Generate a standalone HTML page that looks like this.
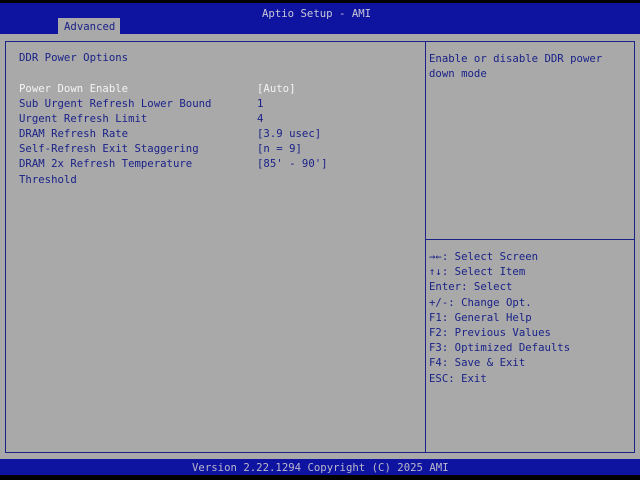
<!DOCTYPE html>
<html><head><style>
body{margin:0;width:640px;height:480px;overflow:hidden;background:#000;font-family:"DejaVu Sans Mono","Liberation Mono",monospace;font-size:10.67px;}
.hdr{position:absolute;left:0;top:3px;width:640px;height:31px;background:#0f14a0;}
.t{position:absolute;white-space:pre;line-height:12px;}
.body{position:absolute;left:0;top:34px;width:640px;height:425px;background:#a9a9a9;}
.foot{position:absolute;left:0;top:459px;width:640px;height:16px;background:#0f14a0;}
.b{color:#1a2288;}
</style></head><body>
<div class="hdr"></div>
<div class="t" style="left:262px;top:8px;color:#c8c8d8">Aptio Setup - AMI</div>
<div style="position:absolute;left:58px;top:18px;width:62px;height:17px;background:#a9a9a9"></div>
<div class="t" style="left:64px;top:21px;color:#1a2288">Advanced</div>
<div class="body"></div>
<div style="position:absolute;left:5px;top:41px;width:628px;height:410px;border:1px solid #1a2288"></div>
<div style="position:absolute;left:425px;top:41px;width:1px;height:411px;background:#1a2288"></div>
<div style="position:absolute;left:426px;top:239px;width:208px;height:1px;background:#1a2288"></div>
<div class="t b" style="left:19px;top:52px">DDR Power Options</div>
<div class="t" style="left:19px;top:83px;color:#f4f4f4">Power Down Enable</div>
<div class="t b" style="left:19px;top:98px">Sub Urgent Refresh Lower Bound</div>
<div class="t b" style="left:19px;top:113px">Urgent Refresh Limit</div>
<div class="t b" style="left:19px;top:128px">DRAM Refresh Rate</div>
<div class="t b" style="left:19px;top:143px">Self-Refresh Exit Staggering</div>
<div class="t b" style="left:19px;top:158px">DRAM 2x Refresh Temperature</div>
<div class="t b" style="left:19px;top:174px">Threshold</div>
<div class="t" style="left:257px;top:83px;color:#f4f4f4">[Auto]</div>
<div class="t b" style="left:257px;top:98px">1</div>
<div class="t b" style="left:257px;top:113px">4</div>
<div class="t b" style="left:257px;top:128px">[3.9 usec]</div>
<div class="t b" style="left:257px;top:143px">[n = 9]</div>
<div class="t b" style="left:257px;top:158px">[85' - 90']</div>
<div class="t b" style="left:429px;top:51px;line-height:15px">Enable or disable DDR power
down mode</div>
<div class="t b" style="left:429px;top:249px;line-height:15.2px">→←: Select Screen
↑↓: Select Item
Enter: Select
+/-: Change Opt.
F1: General Help
F2: Previous Values
F3: Optimized Defaults
F4: Save &amp; Exit
ESC: Exit</div>
<div class="foot"></div>
<div class="t" style="left:192px;top:462px;color:#b8b8cc">Version 2.22.1294 Copyright (C) 2025 AMI</div>
</body></html>
